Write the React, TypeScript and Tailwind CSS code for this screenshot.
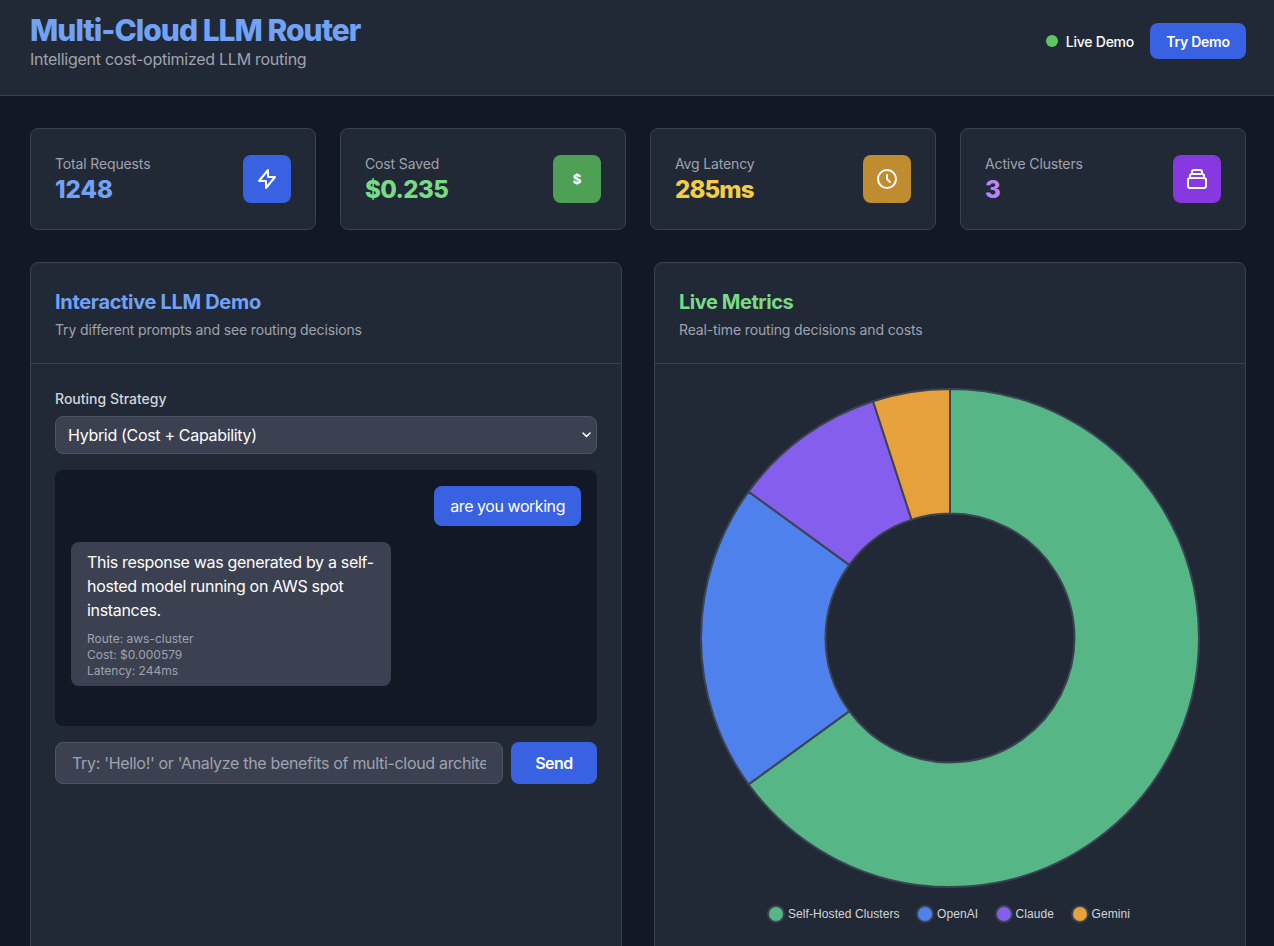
import React from "react";

const ICONS = {
  bolt: "M13 10V3L4 14h7v7l9-11h-7z",
  clock: "M12 8v4l3 3m6-3a9 9 0 11-18 0 9 9 0 0118 0z",
  stack:
    "M19 11H5m14 0a2 2 0 012 2v6a2 2 0 01-2 2H5a2 2 0 01-2-2v-6a2 2 0 012-2m14 0V9a2 2 0 00-2-2M5 11V9a2 2 0 012-2m0 0V5a2 2 0 012-2h6a2 2 0 012 2v2M7 7h10",
};

function StrokeIcon({ d }: { d: string }) {
  return (
    <svg className="size-6" viewBox="0 0 24 24" fill="none" stroke="currentColor" strokeWidth="2" strokeLinecap="round" strokeLinejoin="round">
      <path d={d} />
    </svg>
  );
}

type Stat = { label: string; value: string; valueClass: string; iconClass: string; icon: React.ReactNode };

const STATS: Stat[] = [
  { label: "Total Requests", value: "1248", valueClass: "text-[#71a2f5] tracking-[0em]", iconClass: "bg-[#3962e3]", icon: <StrokeIcon d={ICONS.bolt} /> },
  { label: "Cost Saved", value: "$0.235", valueClass: "text-[#78db86] tracking-[-0.025em]", iconClass: "bg-[#4ea154]", icon: <span className="text-[13px] leading-4 font-extrabold">$</span> },
  { label: "Avg Latency", value: "285ms", valueClass: "text-[#f4cd47] tracking-[-0.035em]", iconClass: "bg-[#c08c30]", icon: <StrokeIcon d={ICONS.clock} /> },
  { label: "Active Clusters", value: "3", valueClass: "text-[#b885f5]", iconClass: "bg-[#8838df]", icon: <StrokeIcon d={ICONS.stack} /> },
];

function StatCard({ stat }: { stat: Stat }) {
  return (
    <div className="flex h-[102px] items-center justify-between rounded-lg border border-[#3a414f] bg-[#222936] p-6">
      <div className="-mb-0.5">
        <p className="text-sm tracking-[-0.01em] text-[#9fa3ae]">{stat.label}</p>
        <p className={`text-2xl font-extrabold ${stat.valueClass}`}>{stat.value}</p>
      </div>
      <div className={`flex size-12 items-center justify-center rounded-lg text-white ${stat.iconClass}`}>{stat.icon}</div>
    </div>
  );
}

const SLICES = [
  { label: "Self-Hosted Clusters", share: 65, color: "#56b686" },
  { label: "OpenAI", share: 20, color: "#4f81ed" },
  { label: "Claude", share: 10, color: "#855eee" },
  { label: "Gemini", share: 5, color: "#e7a13c" },
];

function ringPath(start: number, end: number) {
  const c = 271;
  const cy = 250;
  const R = 249;
  const r = 124.5;
  const pt = (f: number, rad: number) => {
    const a = f * 2 * Math.PI;
    return `${(c + rad * Math.sin(a)).toFixed(2)} ${(cy - rad * Math.cos(a)).toFixed(2)}`;
  };
  const large = end - start > 0.5 ? 1 : 0;
  return `M${pt(start, R)}A${R} ${R} 0 ${large} 1 ${pt(end, R)}L${pt(end, r)}A${r} ${r} 0 ${large} 0 ${pt(start, r)}Z`;
}

function Doughnut() {
  let acc = 0;
  return (
    <svg className="block h-[502px] w-[542px]" viewBox="0 0 542 502">
      {SLICES.map((s) => {
        const start = acc / 100;
        acc += s.share;
        return <path key={s.label} d={ringPath(start, acc / 100)} fill={s.color} stroke="#3a4453" strokeWidth="2" strokeLinejoin="bevel" />;
      })}
    </svg>
  );
}

function Panel({ title, titleClass, subtitle, children }: { title: string; titleClass: string; subtitle: string; children: React.ReactNode }) {
  return (
    <section className="h-[900px] rounded-lg border border-[#3a414f] bg-[#222936]">
      <div className="border-b border-[#3a414f] px-6 pt-[25px] pb-[23px]">
        <h2 className={`text-xl font-bold ${titleClass}`}>{title}</h2>
        <p className="mt-1 text-sm tracking-[-0.01em] text-[#9fa3ae]">{subtitle}</p>
      </div>
      <div className="p-6">{children}</div>
    </section>
  );
}

export default function App() {
  return (
    <div className="h-[946px] overflow-hidden bg-[#121826] font-['Inter',sans-serif] text-white">
      <header className="flex h-24 justify-between border-b border-[#3a414f] bg-[#222936] pt-3 pr-7 pl-[30px]">
        <div>
          <h1 className="text-3xl font-extrabold tracking-[-0.033em] text-[#71a2f5]">Multi-Cloud LLM Router</h1>
          <p className="-mt-px tracking-[-0.0165em] text-[#9fa3ae]">Intelligent cost-optimized LLM routing</p>
        </div>
        <div className="mt-[11px] flex h-9 items-center gap-4 text-sm font-medium">
          <div className="flex items-center gap-2">
            <span className="size-3 rounded-full bg-[#60c466]" />
            <span className="pt-0.5 tracking-[-0.018em]">Live Demo</span>
          </div>
          <button className="h-9 w-24 rounded-lg bg-[#3962e3] pt-0.5 font-semibold tracking-[-0.018em]">Try Demo</button>
        </div>
      </header>
      <main className="pt-8 pr-7 pl-[30px]">
        <div className="grid grid-cols-4 gap-6">
          {STATS.map((s) => (
            <StatCard key={s.label} stat={s} />
          ))}
        </div>
        <div className="mt-8 grid grid-cols-2 gap-8">
          <Panel title="Interactive LLM Demo" titleClass="text-[#71a2f5] tracking-[-0.016em]" subtitle="Try different prompts and see routing decisions">
            <label className="block pt-px text-sm font-medium text-[#d3d5da]">Routing Strategy</label>
            <div className="mt-[7px] flex h-[38px] items-center justify-between rounded-lg border border-[#4d5562] bg-[#3b4150] pr-[5px] pl-3">
              <span className="tracking-[-0.02em]">Hybrid (Cost + Capability)</span>
              <svg className="h-[6px] w-[9px]" viewBox="0 0 9 6" fill="none" stroke="white" strokeWidth="1.5" strokeLinecap="round" strokeLinejoin="round">
                <path d="M1 1l3.5 3.6L8 1" />
              </svg>
            </div>
            <div className="mt-4 flex h-64 flex-col gap-4 rounded-lg bg-[#121826] p-4">
              <div className="self-end rounded-lg bg-[#3962e3] px-4 py-2 tracking-[-0.028em]">are you working</div>
              <div className="h-36 w-80 self-start rounded-lg bg-[#3b4150] px-4 py-2">
                <p className="tracking-[-0.02em]">
                  This response was generated by a self-
                  <br />
                  hosted model running on AWS spot
                  <br />
                  instances.
                </p>
                <div className="mt-[9px] text-xs text-[#9fa3ae]">
                  <p>Route: aws-cluster</p>
                  <p>Cost: $0.000579</p>
                  <p>Latency: 244ms</p>
                </div>
              </div>
            </div>
            <div className="mt-4 flex gap-2">
              <div className="h-[42px] w-[448px] rounded-lg border border-[#4d5562] bg-[#3b4150] px-4 py-2">
                <p className="overflow-hidden whitespace-nowrap tracking-[-0.02em] text-[#9fa3ae]">Try: 'Hello!' or 'Analyze the benefits of multi-cloud architecture'</p>
              </div>
              <button className="h-[42px] w-[86px] rounded-lg bg-[#3962e3] font-semibold tracking-[-0.03em]">Send</button>
            </div>
          </Panel>
          <Panel title="Live Metrics" titleClass="text-[#78db86] tracking-[-0.022em]" subtitle="Real-time routing decisions and costs">
            <Doughnut />
            <div className="mt-4 ml-[89px] flex h-4 items-center gap-[17.4px] font-['Liberation_Sans',sans-serif] text-xs tracking-[0.08px] text-[#d3d5da]">
              {SLICES.map((s) => (
                <div key={s.label} className="flex items-center gap-1">
                  <svg className="size-4 overflow-visible" viewBox="0 0 16 16">
                    <circle cx="8" cy="8" r="8" fill={s.color} stroke="#3a4453" strokeWidth="2" />
                  </svg>
                  <span>{s.label}</span>
                </div>
              ))}
            </div>
          </Panel>
        </div>
      </main>
    </div>
  );
}
